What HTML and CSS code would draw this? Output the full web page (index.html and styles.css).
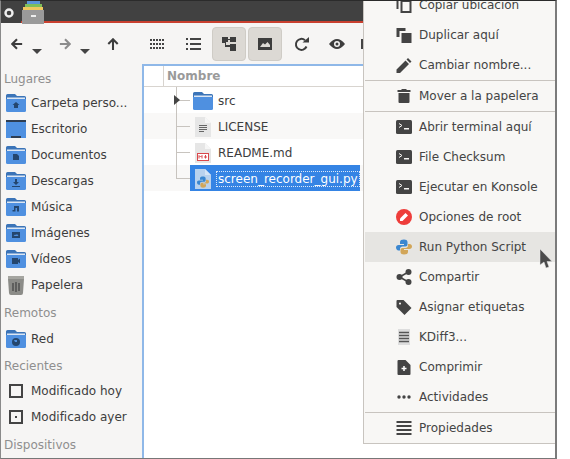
FILE: index.html
```html
<!DOCTYPE html>
<html lang="es">
<head>
  <meta charset="UTF-8">
  <title>Nemo</title>
  <link rel="stylesheet" href="styles.css">
</head>
<body>
  <svg class="defs" width="0" height="0">
    <defs>
      <symbol id="folder" viewBox="0 0 20 18">
        <path d="M0 1.500Q0 0 1.500 0H9l2 2h7.500Q20 2 20 3.500V8H0z" fill="#3b74b8"/>
        <rect x="1" y="3.500" width="18" height="1.500" fill="#dbe6f3"/>
        <path d="M0 5h20v11.500Q20 18 18.500 18h-17Q0 18 0 16.500z" fill="#4f90e0"/>
      </symbol>
      <symbol id="python" viewBox="0 0 16 16">
        <path d="M8 .5C5.500.5 4 1.300 4 3v2h4v1H2.500C1 6 0 7 0 8.500S1 11.500 2.500 11.500H4V10c0-1.500 1-2.500 2.500-2.500h3c1.300 0 2-.9 2-2V3C11.500 1.300 10 .5 8 .5z" fill="#3b87d0"/>
        <path d="M8 15.500c2.500 0 4-.8 4-2.500v-2H8v-1h5.500c1.500 0 2.500-1 2.500-2.500S15 5 13.500 5H12v1.500C12 8 11 9 9.500 9h-3c-1.300 0-2 .9-2 2v2c0 1.700 1.500 2.500 3.500 2.500z" fill="#d2a659"/>
      </symbol>
      <symbol id="terminal" viewBox="0 0 16 14">
        <rect width="16" height="14" rx="1.500" fill="#444"/>
        <path d="M3 3.500 6 5.500 3 7.500" fill="none" stroke="#f8f7f5"/>
        <rect x="8" y="8" width="5" height="1.500" fill="#f8f7f5"/>
      </symbol>
      <pattern id="dots" width="3" height="4" patternUnits="userSpaceOnUse">
        <rect width="2" height="2" fill="#444"/>
      </pattern>
    </defs>
  </svg>

  <div class="window">
    <header class="titlebar">
      <svg class="gear" width="12" height="12" viewBox="0 0 12 12"><circle cx="6" cy="6" r="3.500" fill="none" stroke="#eee" stroke-width="2.400"/></svg>
      <svg class="app-tab" width="22" height="23" viewBox="0 0 22 23">
        <rect x="5" y="0" width="13" height="4" fill="#5b93d8"/>
        <rect x="3" y="3" width="17" height="4" fill="#7fbf5a"/>
        <rect x="1" y="6" width="20" height="4" fill="#f0c75e"/>
        <rect x="0" y="9" width="22" height="14" fill="#9a9a9a"/>
        <rect x="9" y="14" width="5" height="2" fill="#eee"/>
      </svg>
    </header>

    <nav class="toolbar">
      <svg class="tool back" width="12" height="12" viewBox="0 0 14 14"><path d="M13 7H2M7 1.500 1.500 7 7 12.500" fill="none" stroke="#3d3d3d" stroke-width="2.400"/></svg>
      <span class="caret"></span>
      <svg class="tool forward" width="12" height="12" viewBox="0 0 14 14"><path d="M1 7h11M7 1.500 12.500 7 7 12.500" fill="none" stroke="#8c8c8c" stroke-width="2.400"/></svg>
      <span class="caret"></span>
      <svg class="tool up" width="12" height="12" viewBox="0 0 14 14"><path d="M7 14V2M1.500 7 7 1.500 12.500 7" fill="none" stroke="#3d3d3d" stroke-width="2.400"/></svg>
      <svg class="tool grid" width="14" height="10" viewBox="0 0 14 10"><rect width="14" height="10" fill="url(#dots)"/></svg>
      <svg class="tool list" width="15" height="12" viewBox="0 0 15 12"><path d="M0 0h2v2H0zM0 5h2v2H0zM0 10h2v2H0zM4 0h11v2H4zM4 5h11v2H4zM4 10h11v2H4z" fill="#444"/></svg>
      <span class="toggle first">
        <svg width="14" height="14" viewBox="0 0 14 14"><path d="M0 0h6v2h2V0h6v5H8V3H6v2H4v3h4V7h6v7H8v-4H3V6H0z" fill="#3d3d3d"/></svg>
      </span>
      <span class="toggle">
        <svg width="14" height="12" viewBox="0 0 14 12"><path d="M0 0h14v12H0zM2 9h10V7L9.500 4 7 6.500 5 5z" fill="#3d3d3d" fill-rule="evenodd"/></svg>
      </span>
      <svg class="tool reload" width="15" height="15" viewBox="0 0 15 15"><path d="M12.500 9.500A5.500 5.500 0 1 1 11 3.200" fill="none" stroke="#3d3d3d" stroke-width="2"/><path d="M8.500 5.500H15V0z" fill="#3d3d3d"/></svg>
      <svg class="tool eye" width="16" height="10" viewBox="0 0 16 10"><path d="M0 5Q4 0 8 0t8 5Q12 10 8 10T0 5zM8 2a3 3 0 1 0 0 6 3 3 0 0 0 0-6z" fill="#3d3d3d" fill-rule="evenodd"/><circle cx="8" cy="5" r="1.500" fill="#3d3d3d"/></svg>
      <span class="tool more"></span>
    </nav>

    <div class="main">
      <aside class="sidebar">
        <h2 class="side-head first">Lugares</h2>
        <a class="side-item">
          <svg class="side-icon" width="20" height="18"><use href="#folder"/><path d="M10 8 6.500 11H8v3h4v-3h1.500z" fill="#24466e"/></svg>Carpeta perso...
        </a>
        <a class="side-item">
          <svg class="side-icon" width="20" height="18" viewBox="0 0 20 18"><rect width="20" height="18" fill="#4f90e0"/><rect width="20" height="2" fill="#2f3e52"/><rect x="5" y="16" width="10" height="2" fill="#2f3e52"/></svg>Escritorio
        </a>
        <a class="side-item">
          <svg class="side-icon" width="20" height="18"><use href="#folder"/><path d="M7 8h4l2 2v4H7z" fill="#24466e"/></svg>Documentos
        </a>
        <a class="side-item">
          <svg class="side-icon" width="20" height="18"><use href="#folder"/><path d="M9 7h2v3h2l-3 3-3-3h2zM6 14h8v1H6z" fill="#24466e"/></svg>Descargas
        </a>
        <a class="side-item">
          <svg class="side-icon" width="20" height="18"><use href="#folder"/><path d="M8 8h5v5.500h-2V10H9.500v3.500H6.500V12H8z" fill="#24466e"/></svg>Música
        </a>
        <a class="side-item">
          <svg class="side-icon" width="20" height="18"><use href="#folder"/><path d="M6 8h8v6H6zM7.500 12h5l-1.500-2-1 1-1-.5z" fill="#24466e" fill-rule="evenodd"/></svg>Imágenes
        </a>
        <a class="side-item">
          <svg class="side-icon" width="20" height="18"><use href="#folder"/><path d="M6 8h6v2l2-1.500v5L12 12v2H6z" fill="#24466e"/></svg>Vídeos
        </a>
        <a class="side-item">
          <svg class="side-icon" width="20" height="20" viewBox="0 0 20 20"><rect x="2" y="1" width="16" height="3" fill="#a5a5a0"/><path d="M2 4h16l-1 14q0 2-2 2H5q-2 0-2-2z" fill="#8c8c88"/><path d="M7 8v8M10 7v10M13 8v8" stroke="#4c4c4c" stroke-width="1.400"/></svg>Papelera
        </a>

        <h2 class="side-head">Remotos</h2>
        <a class="side-item">
          <svg class="side-icon" width="20" height="18"><use href="#folder"/><circle cx="10" cy="12" r="4" fill="#24466e"/><path d="M8 10h3v2H9z" fill="#4f90e0"/></svg>Red
        </a>

        <h2 class="side-head tight">Recientes</h2>
        <a class="side-item">
          <span class="day"></span>Modificado hoy
        </a>
        <a class="side-item">
          <span class="day dot"></span>Modificado ayer
        </a>

        <h2 class="side-head">Dispositivos</h2>
      </aside>

      <section class="view">
        <div class="col-head"><span class="col-name">Nombre</span></div>
        <div class="row">
          <span class="branch"></span>
          <span class="expander"></span>
          <span class="file">
            <svg class="file-icon" width="20" height="18"><use href="#folder"/></svg>src
          </span>
        </div>
        <div class="row alt">
          <span class="branch"></span>
          <span class="file">
            <svg class="file-icon" width="20" height="20" viewBox="0 0 20 20"><path d="M2 0h10l6 6v14H2z" fill="#e6e6e6"/><path d="M12 0l6 6h-6z" fill="#f6f6f6"/><path d="M6 8.500h8M6 10.500h8M6 12.500h8M6 14.500h5" stroke="#666"/></svg>LICENSE
          </span>
        </div>
        <div class="row">
          <span class="branch"></span>
          <span class="file">
            <svg class="file-icon" width="20" height="20" viewBox="0 0 20 20"><path d="M2 0h10l6 6v14H2z" fill="#e6e6e6"/><path d="M12 0l6 6h-6z" fill="#f6f6f6"/><rect x="4.500" y="10.500" width="11" height="7" fill="#fff" stroke="#d9484c"/><path d="M6 15.500v-3l1.500 1.500L9 12.500v3M12.500 12v3.500M11 14h3" fill="none" stroke="#d9484c"/></svg>README.md
          </span>
        </div>
        <div class="row alt">
          <span class="branch last"></span>
          <span class="file selected">
            <svg class="file-icon" width="20" height="20" viewBox="0 0 20 20"><path d="M2 0h10l6 6v14H2z" fill="#b9d2ee"/><path d="M12 0l6 6h-6z" fill="#d6e5f6"/><svg x="4" y="7" width="12" height="12" viewBox="0 0 16 16"><use href="#python"/></svg></svg>
            <span class="focus-name">screen_recorder_gui.py</span>
          </span>
        </div>
      </section>
    </div>

    <ul class="menu">
      <li class="menu-item">
        <svg width="15" height="16" viewBox="0 0 15 16"><path d="M0 0h2v12H0zM4 3h11v13H4zM6 5v9h7V5z" fill="#444" fill-rule="evenodd"/></svg>Copiar ubicación
      </li>
      <li class="menu-item">
        <svg width="15" height="15" viewBox="0 0 15 15"><path d="M0 0h9v3H3v6H0zM5 5h10v10H5z" fill="#444"/></svg>Duplicar aquí
      </li>
      <li class="menu-item">
        <svg width="15" height="15" viewBox="0 0 15 15"><path d="M0 15v-3.500L9 2.500 12.500 6 3.500 15zM10 1.500 11.500 0 15 3.500 13.500 5z" fill="#444"/></svg>Cambiar nombre...
      </li>
      <li class="menu-sep"></li>
      <li class="menu-item">
        <svg width="13" height="14" viewBox="0 0 13 14"><path d="M4 0h5v1h4v2H0V1h4zM1 4h11v9q0 1-1 1H2q-1 0-1-1z" fill="#444"/></svg>Mover a la papelera
      </li>
      <li class="menu-sep"></li>
      <li class="menu-item">
        <svg width="16" height="14"><use href="#terminal"/></svg>Abrir terminal aquí
      </li>
      <li class="menu-item">
        <svg width="16" height="14"><use href="#terminal"/></svg>File Checksum
      </li>
      <li class="menu-item">
        <svg width="16" height="14"><use href="#terminal"/></svg>Ejecutar en Konsole
      </li>
      <li class="menu-item">
        <svg width="16" height="16" viewBox="0 0 16 16"><circle cx="8" cy="8" r="8" fill="#ee3d3a"/><path d="M4 12v-2.500L9.500 4 12 6.500 6.500 12z" fill="#fff"/></svg>Opciones de root
      </li>
      <li class="menu-item hover">
        <svg width="16" height="16"><use href="#python"/></svg>Run Python Script
      </li>
      <li class="menu-item">
        <svg width="15" height="16" viewBox="0 0 15 16"><circle cx="3" cy="8" r="3" fill="#444"/><circle cx="12" cy="3" r="3" fill="#444"/><circle cx="12" cy="13" r="3" fill="#444"/><path d="M3 8l9-5M3 8l9 5" stroke="#444" stroke-width="1.500"/></svg>Compartir
      </li>
      <li class="menu-item">
        <svg width="15" height="15" viewBox="0 0 15 15"><path d="M0 1q0-1 1-1h6l8 8-7 7-8-8zM3.500 2.500a1 1 0 1 0 .01 0z" fill="#444" fill-rule="evenodd"/></svg>Asignar etiquetas
      </li>
      <li class="menu-item">
        <svg class="narrow" width="12" height="16" viewBox="0 0 12 16"><rect width="12" height="16" fill="#ddd"/><path d="M1 3.500h10M1 6.500h10M1 9.500h10M1 12.500h10" stroke="#555" stroke-width="1.400"/></svg>KDiff3...
      </li>
      <li class="menu-item">
        <svg class="narrow" width="13" height="15" viewBox="0 0 13 15"><path d="M1 0h7l5 5v9q0 1-1 1H1q-1 0-1-1V1q0-1 1-1z" fill="#444"/><path d="M6.500 6v5M4 8.500h5" stroke="#fff" stroke-width="1.500"/></svg>Comprimir
      </li>
      <li class="menu-item">
        <svg width="14" height="4" viewBox="0 0 14 4"><circle cx="2" cy="2" r="1.700" fill="#444"/><circle cx="7" cy="2" r="1.700" fill="#444"/><circle cx="12" cy="2" r="1.700" fill="#444"/></svg>Actividades
      </li>
      <li class="menu-sep"></li>
      <li class="menu-item">
        <svg width="15" height="14" viewBox="0 0 15 14"><path d="M0 0h15v2H0zM0 4h15v2H0zM0 8h15v2H0zM0 12h15v2H0z" fill="#444"/></svg>Propiedades
      </li>
    </ul>

    <svg class="pointer" width="14" height="21" viewBox="0 0 14 21"><path d="M1 1v16l4-3 2 6 3-1-2-5.500h5z" fill="#4a4a4a" stroke="#e8e8e8" stroke-width=".5"/></svg>
  </div>
</body>
</html>
```

FILE: styles.css
```css
html, body { margin: 0; height: 100%; background: #fff; overflow: hidden; }
body { font-family: 'DejaVu Sans', sans-serif; font-size: 12px; color: #3d3d3d; }
.defs { position: absolute; }

.window {
  position: relative;
  box-sizing: border-box;
  width: 557px;
  height: 459px;
  display: flex;
  flex-direction: column;
  overflow: hidden;
  background: #f6f5f4;
  border-top: 1px solid #2b2b2b;
  border-left: 1px solid #8a8a8a;
  border-right: 2px solid #7b7b7b;
  border-bottom: 1px solid #777;
}

/* title bar */
.titlebar {
  height: 22px;
  flex: none;
  display: flex;
  align-items: center;
  background: linear-gradient(#c9402f, #c9402f) 20px 100% / 100% 2px no-repeat, #414141;
}
.gear { margin-left: 2px; margin-top: 2px; }
.app-tab { margin-left: 7px; }

/* toolbar */
.toolbar {
  height: 41px;
  flex: none;
  display: flex;
  align-items: center;
  box-sizing: border-box;
  padding: 1px 0 0 10px;
}
.caret {
  width: 0;
  height: 0;
  margin: 15px 0 0 9px;
  border-left: 5px solid transparent;
  border-right: 5px solid transparent;
  border-top: 5px solid #444;
}
.tool { flex: none; }
.forward { margin-left: 17px; }
.up { margin-left: 17px; }
.grid { margin-left: 31px; }
.list { margin-left: 22px; }
.toggle {
  box-sizing: border-box;
  width: 34px;
  height: 34px;
  display: flex;
  align-items: center;
  justify-content: center;
  margin-left: 2px;
  background: #dcd9d4;
  border: 1px solid #cfccc6;
  border-radius: 4px;
}
.toggle.first { margin-left: 11px; }
.reload { margin-left: 12px; }
.eye { margin-left: 20px; }
.more { width: 4px; height: 10px; margin-left: 16px; background: #444; }

/* main area */
.main { flex: 1; min-height: 0; display: flex; }

.sidebar { width: 141px; flex: none; overflow: hidden; }
.side-head {
  height: 26px;
  margin: 2px 0 0;
  padding-left: 3px;
  font-size: 12px;
  font-weight: normal;
  line-height: 26px;
  color: #8f8f8f;
}
.side-head.first { margin-top: 0; line-height: 30px; }
.side-head.tight { margin-top: 1px; height: 25px; }
.side-item {
  height: 26px;
  display: flex;
  align-items: center;
  white-space: nowrap;
}
.side-icon { width: 20px; margin: 0 5px 0 5px; flex: none; }
.day {
  box-sizing: border-box;
  width: 14px;
  height: 14px;
  margin: 0 8px 0 8px;
  border: 2px solid #444;
  display: flex;
  align-items: center;
  justify-content: center;
}
.day.dot::before { content: ""; width: 2px; height: 2px; background: #444; }

/* file list */
.view {
  flex: 1;
  min-width: 0;
  overflow: hidden;
  background: #fff;
  border-top: 2px solid #8fb8e8;
  border-left: 2px solid #8fb8e8;
}
.col-head {
  height: 20px;
  border-bottom: 1px solid #d8d4cf;
  padding-left: 19px;
}
.col-name {
  display: block;
  height: 20px;
  padding-left: 3px;
  border-left: 1px solid #d8d4cf;
  font-weight: bold;
  line-height: 20px;
  color: #9a9a9a;
}
.row { position: relative; height: 26px; display: flex; }
.row.alt { background: #f9f8f7; }
.branch {
  width: 14px;
  margin-left: 32px;
  flex: none;
  background:
    linear-gradient(#c8c4bf, #c8c4bf) 0 0 / 1px 100% no-repeat,
    linear-gradient(#c8c4bf, #c8c4bf) 0 50% / 100% 1px no-repeat;
}
.branch.last { background-size: 1px 50%, 100% 1px; }
.expander {
  position: absolute;
  left: 30px;
  top: 8px;
  width: 0;
  height: 0;
  border-left: 6px solid #444;
  border-top: 5px solid transparent;
  border-bottom: 5px solid transparent;
}
.file {
  box-sizing: border-box;
  width: 170px;
  padding-top: 2px;
  display: flex;
  align-items: center;
  white-space: nowrap;
  color: #3d3d3d;
}
.file-icon { margin: 0 5px 0 3px; flex: none; }
.file.selected { background: #3584e4; color: #fff; }
.focus-name { outline: 1px dotted #dbe8f8; padding: 0 1px; margin-left: -1px; }

/* context menu */
.menu {
  position: absolute;
  left: 362px;
  top: -11px;
  right: 0;
  margin: 0;
  padding: 0;
  list-style: none;
  background: #f8f7f5;
  border-left: 1px solid #c8c4bf;
  border-bottom: 1px solid #c8c4bf;
  color: #444;
}
.menu-item {
  height: 30px;
  margin-left: 1px;
  padding-left: 31px;
  display: flex;
  align-items: center;
  white-space: nowrap;
}
.menu-item svg { width: 16px; margin-right: 7px; flex: none; }
.menu-item.hover { background: #e6e5e2; }
.menu-sep { height: 1px; margin-left: 1px; background: #c8c4bf; }

.pointer { position: absolute; left: 538px; top: 247px; }
```
